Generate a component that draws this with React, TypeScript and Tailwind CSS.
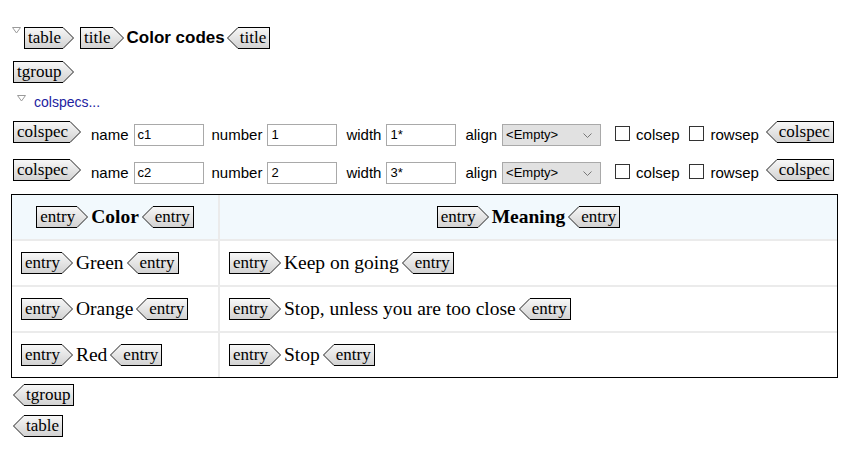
import { Fragment, useId } from "react";
import clsx from "clsx";

const serif = "font-['Liberation_Serif',serif]";
const sans = "font-['Liberation_Sans',Arial,sans-serif]";

function Arrow({ left }: { left?: boolean }) {
	const id = useId();
	const pts = left ? "11,0.5 0.5,11 11,21.5" : "0,0.5 10.5,11 0,21.5";
	return (
		<svg width="11" height="22" viewBox="0 0 11 22" className="block shrink-0">
			<defs>
				<linearGradient id={id} x1="0" y1="0" x2="0" y2="1">
					<stop offset="0" stopColor="#f7f7f7" />
					<stop offset="1" stopColor="#d2d2d2" />
				</linearGradient>
			</defs>
			<polygon points={pts} fill={`url(#${id})`} stroke="none" />
			<polyline points={pts} fill="none" stroke="#222" strokeWidth="1" />
		</svg>
	);
}

function Tag({ name, close }: { name: string; close?: boolean }) {
	return (
		<span className="flex h-[22px] shrink-0 items-stretch">
			{close && <Arrow left />}
			<span
				className={clsx(
					"flex items-center border-y border-black bg-linear-to-b from-[#f7f7f7] to-[#d2d2d2] pb-[2px] text-[17px] leading-none text-black",
					serif,
					close ? "border-r pl-[2px] pr-[3px]" : "border-l pl-[3px] pr-[2px]",
				)}
			>
				{name}
			</span>
			{!close && <Arrow />}
		</span>
	);
}

function Twisty() {
	return (
		<svg width="9" height="7" viewBox="0 0 9 7" className="block shrink-0">
			<polygon points="0.5,0.5 8.5,0.5 4.5,6" fill="#fff" stroke="#9a9a9a" />
		</svg>
	);
}

function Field({ value }: { value: string }) {
	return (
		<div className="mt-[3px] flex h-[22px] w-[70px] shrink-0 items-center border border-[#a9a9a9] bg-white pl-[3px] text-[13px] text-black">
			{value}
		</div>
	);
}

function Check({ className }: { className: string }) {
	return (
		<span className={clsx("mt-[5px] block h-[15px] w-[15px] shrink-0 border border-[#333] bg-white", className)} />
	);
}

function Label({ text, className }: { text: string; className: string }) {
	return <span className={clsx("mt-[5px] leading-[17px]", className)}>{text}</span>;
}

function ColspecRow({ name, num, width }: { name: string; num: string; width: string }) {
	return (
		<div className={clsx("flex h-[22px] items-start text-[15px] text-black", sans)}>
			<Tag name="colspec" />
			<Label text="name" className="ml-[10px] mr-[5px]" />
			<Field value={name} />
			<Label text="number" className="ml-[8px] mr-[5px]" />
			<Field value={num} />
			<Label text="width" className="ml-[9px] mr-[5px]" />
			<Field value={width} />
			<Label text="align" className="ml-[9px] mr-[5px]" />
			<div className="mt-[3px] flex h-[22px] w-[99px] shrink-0 items-center justify-between border border-[#a9a9a9] bg-[#e1e1e1] pl-[3px] pr-[8px] text-[13px]">
				<span>&lt;Empty&gt;</span>
				<svg width="9" height="5" viewBox="0 0 9 5">
					<polyline points="0.5,0.5 4.5,4.5 8.5,0.5" fill="none" stroke="#777" />
				</svg>
			</div>
			<Check className="ml-[14px]" />
			<Label text="colsep" className="ml-[6px]" />
			<Check className="ml-[10px]" />
			<Label text="rowsep" className="ml-[6px]" />
			<div className="ml-[7px] flex">
				<Tag name="colspec" close />
			</div>
		</div>
	);
}

function Cell({ text, head }: { text: string; head?: boolean }) {
	return (
		<div
			className={clsx(
				"flex h-[44px] items-center",
				head ? "justify-center bg-[#f2f9fd]" : "bg-white pl-[9px]",
			)}
		>
			<Tag name="entry" />
			<span
				className={clsx(
					"mx-[3px] pb-[1px] text-[19.5px] leading-none text-black",
					serif,
					head && "font-bold",
				)}
			>
				{text}
			</span>
			<Tag name="entry" close />
		</div>
	);
}

const rows = [
	["Green", "Keep on going"],
	["Orange", "Stop, unless you are too close"],
	["Red", "Stop"],
];

export default function App() {
	return (
		<div className="h-[460px] w-[854px] overflow-hidden bg-white pl-[13px] pt-[27px]">
			<div className="flex h-[22px] items-start">
				<div className="-ml-[1px] mr-[3px]">
					<Twisty />
				</div>
				<Tag name="table" />
				<div className="ml-[6px] flex">
					<Tag name="title" />
				</div>
				<span className={clsx("ml-[3px] mr-[2px] text-[17px] font-bold leading-[22px] text-black", sans)}>
					Color codes
				</span>
				<Tag name="title" close />
			</div>
			<div className="mt-[12px] flex">
				<Tag name="tgroup" />
			</div>
			<div className="mt-[11px] flex h-[16px] items-start">
				<div className="ml-[4px] mt-[1px]">
					<Twisty />
				</div>
				<span className={clsx("ml-[8px] text-[14px] leading-[16px] text-[#2222a0]", sans)}>
					colspecs...
				</span>
			</div>
			<div className="mt-[11px]">
				<ColspecRow name="c1" num="1" width="1*" />
			</div>
			<div className="mt-[16px]">
				<ColspecRow name="c2" num="2" width="3*" />
			</div>
			<div className="-ml-[2px] mt-[13px] grid w-[827px] grid-cols-[206px_1fr] gap-[2px] border border-black bg-[#ebebeb]">
				<Cell text="Color" head />
				<Cell text="Meaning" head />
				{rows.map(([a, b]) => (
					<Fragment key={a}>
						<Cell text={a} />
						<Cell text={b} />
					</Fragment>
				))}
			</div>
			<div className="mt-[6px] flex">
				<Tag name="tgroup" close />
			</div>
			<div className="mt-[9px] flex">
				<Tag name="table" close />
			</div>
		</div>
	);
}
